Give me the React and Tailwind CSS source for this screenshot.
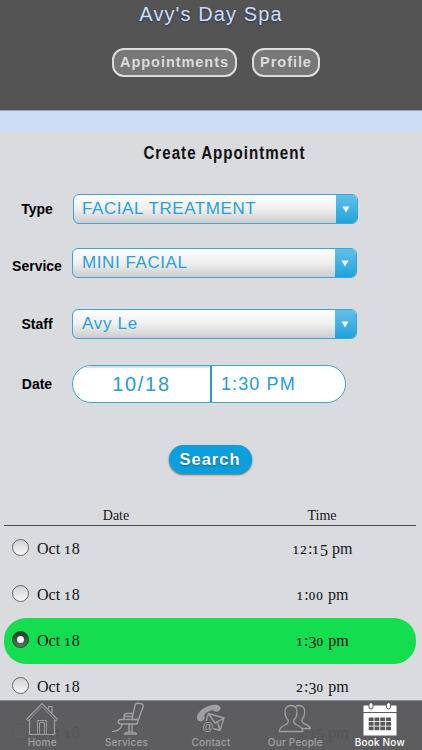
import clsx from "clsx";

const slots = [
  { date: "Oct 18", time: "12:15 pm" },
  { date: "Oct 18", time: "1:00 pm" },
  { date: "Oct 18", time: "1:30 pm", selected: true },
  { date: "Oct 18", time: "2:30 pm" },
  { date: "Oct 18", time: "3:15 pm" },
];

// Old-style figures: 0-2 sit at x-height, 3/4/5/7/9 drop below the baseline
function Figures({ children }) {
  return children.split("").map((char, i) => {
    if ("012".includes(char)) {
      return (
        <span key={i} className="text-[13px] leading-none tracking-[1.2px] [-webkit-text-stroke:0.2px_currentColor]">
          {char}
        </span>
      );
    }
    if ("34579".includes(char)) {
      return (
        <span key={i} className="align-[-2px] leading-none">
          {char}
        </span>
      );
    }
    return char;
  });
}

function HeaderButton({ className, children }) {
  return (
    <button
      className={clsx(
        "h-[29px] rounded-[12px] border-2 border-[#dcdcdc] bg-[#777] text-[14.5px] leading-none font-bold tracking-[0.95px] text-[#dcdcdc] whitespace-nowrap",
        className
      )}
    >
      {children}
    </button>
  );
}

function Label({ children }) {
  return <span className="w-[74px] shrink-0 text-center text-[14px] leading-5 font-bold text-black">{children}</span>;
}

function SelectField({ label, value, className, boxClass, labelClass, textClass }) {
  return (
    <div className={clsx("flex h-[30px] items-center", className)}>
      <div className={clsx("flex", labelClass)}>
        <Label>{label}</Label>
      </div>
      <div
        className={clsx(
          "flex h-[30px] w-[285px] overflow-hidden rounded-[6px] border border-[#3ba5d5] bg-linear-to-b from-white via-[#efefef] to-[#cdcdcd]",
          boxClass
        )}
      >
        <span className={clsx("flex-1 text-[17px] leading-[28px] whitespace-nowrap text-[#2a9fdb]", textClass)}>
          {value}
        </span>
        <span className="flex w-[21px] items-center justify-center bg-linear-to-b from-[#5fc0e8] to-[#18a3dc]">
          <svg width="8" height="7" viewBox="0 0 8 7" className="-ml-px">
            <path d="M0.5 0.5h7L4 6.5z" fill="#fff" />
          </svg>
        </span>
      </div>
    </div>
  );
}

function Radio({ checked }) {
  return (
    <span
      className={clsx(
        "flex size-[17px] items-center justify-center rounded-full border",
        checked
          ? "border-[#174b27] bg-linear-to-b from-[#14401f] to-[#5c7864]"
          : "border-[#65656a] bg-linear-to-b from-[#d2d2d4] to-[#f6f6f6]"
      )}
    >
      {checked && <span className="size-[7px] rounded-full bg-[#f4f4f4]" />}
    </span>
  );
}

function HomeIcon() {
  return (
    <svg width="34" height="34" viewBox="0 0 34 34" fill="none" stroke="currentColor" strokeWidth="1.2">
      <path d="M1.500 17.500 17 1.500l15.500 16M4.500 17v15.500h25V17M23.500 7V4.500h3.500V11" />
      <path d="M12.500 32V18.500h9V32M14.500 32V20.500h5V32" strokeWidth="0.9" />
      <path d="M1.500 17.500l1.500 1.500L17 4.500 31 19l1.500-1.500" strokeWidth="0.8" />
    </svg>
  );
}

function ChairIcon() {
  return (
    <svg width="34" height="34" viewBox="0 0 34 34" fill="none" stroke="currentColor" strokeWidth="1.4" strokeLinecap="round" strokeLinejoin="round">
      <path d="M29.500 1.500c-2-.6-4 .2-4.600 2.200L22 17.500h6.500l4.500-12.500c.6-1.500-.3-3.200-1.800-3.200z" />
      <path d="M10.500 17.500h18l-1.500 4.500H11c-3.200 0-3.700-4.500-.5-4.500z" />
      <path d="M14 17v-3c0-2 1.500-2.500 3.500-2.500H23M14.500 14.500H22" />
      <path d="M19 22v8M22 22v8M14.500 32c0-1.400 2.500-1.900 6-1.900s6 .5 6 1.900z" />
      <path d="M11.500 22c.5 4.500-2.500 7.500-9 7.500M12.500 22.500c-1 2-3 6-10 7" strokeWidth="1" />
    </svg>
  );
}

function ContactIcon() {
  return (
    <svg width="30" height="30" viewBox="0 0 30 30" fill="none" stroke="currentColor">
      <path
        d="M1 14.500C.5 8 10 .5 20.500.8c2.500.2 4 1.700 4 3.700 0 3-5.500 4.500-7.500 1.500C12.500 7 9 9 8 11.500c2.500 2-1.200 6.700-4.200 5.800C2.200 16.900 1.200 16 1 14.500z"
        fill="currentColor"
        stroke="none"
      />
      <path d="M12.500 9.500 28 14l-4 12.500-7-2M12.500 9.500 10 17.500M12.500 9.500l6.500 9.700L28 14M24 26.500l-2.500-8.500" strokeWidth="1.400" />
      <circle cx="12" cy="22.800" r="5.700" fill="#58585a" stroke="none" />
      <text x="6.200" y="26.200" fontSize="11.500" fontFamily="Liberation Sans" fontWeight="700" fill="currentColor" stroke="none">
        @
      </text>
    </svg>
  );
}

function PeopleIcon() {
  return (
    <svg width="34" height="29" viewBox="0 0 34 29" fill="none" stroke="currentColor" strokeWidth="1.300" strokeLinejoin="round">
      <path d="M13 1.500c-4 0-6.500 2.500-6 7 .1 3.500 1.500 6 3.300 7.800.2 2.700-.8 3.700-3.300 4.700-3.500 1.300-5.300 2.500-5.800 6.500h23.600c-.5-4-2.300-5.200-5.800-6.500-2.500-1-3.500-2-3.300-4.700 1.800-1.800 3.200-4.300 3.300-7.800.5-4.500-2-7-6-7z" />
      <path d="M17.500 2.500c1.200-.7 2.200-1 3.500-1 4 0 6 2.500 5.700 7-.1 3-1.200 5.300-2.800 7-.3 2.700.5 3.500 3 4.500 3.200 1.300 5 2 5.500 4.500h-8.500" />
    </svg>
  );
}

function CalendarIcon() {
  return (
    <svg width="34" height="34" viewBox="0 0 34 34">
      <path d="M0.500 3.500h33V10h-33zM0.500 11h33v22.500h-33z" fill="#fff" />
      <rect x="6" y="0.700" width="4" height="6.300" rx="2" fill="#fff" stroke="#58585a" />
      <rect x="23.500" y="0.700" width="4" height="6.300" rx="2" fill="#fff" stroke="#58585a" />
      {[15.5, 20, 24.5].map((y) =>
        [5.7, 11.5, 17.300, 23.1].map((x) => <rect key={`${x}-${y}`} x={x} y={y} width="4.900" height="3.700" fill="#58585a" />)
      )}
    </svg>
  );
}

const tabs = [
  { label: "Home", icon: HomeIcon },
  { label: "Services", icon: ChairIcon },
  { label: "Contact", icon: ContactIcon },
  { label: "Our People", icon: PeopleIcon },
  { label: "Book Now", icon: CalendarIcon, active: true },
];

function TabBar() {
  return (
    <nav className="absolute inset-x-0 bottom-0 grid h-[50px] grid-cols-5 border-t border-[#8b8b8e] bg-[#565658]/95 font-[Inter,sans-serif]">
      {tabs.map(({ label, icon: Icon, active }) => (
        <a key={label} className={clsx("flex flex-col items-center", active ? "text-white" : "text-[#a0a0a3]")}>
          <span className="flex h-[35px] items-center justify-center">
            <Icon />
          </span>
          <span className="text-[10px] leading-[12px] font-medium tracking-[0.2px] whitespace-nowrap">{label}</span>
        </a>
      ))}
    </nav>
  );
}

export default function App() {
  return (
    <div className="relative h-[750px] w-[422px] overflow-hidden bg-[#dadbdf] font-['Liberation_Sans',Arial,sans-serif]">
      <header className="h-[110px] bg-[#545454] pt-[2px]">
        <h1 className="text-center text-[20px] leading-6 tracking-[1.1px] text-[#cdddf6] [text-shadow:0_1px_2px_#26344d]">
          Avy's Day Spa
        </h1>
        <div className="mt-[22px] ml-[112px] flex gap-[15px]">
          <HeaderButton className="w-[125px]">Appointments</HeaderButton>
          <HeaderButton className="w-[68px]">Profile</HeaderButton>
        </div>
      </header>
      <div className="h-[21px] border-t border-[#98a4b8] bg-[#cdddf6]" />

      <main>
        <h2 className="flex h-[63px] justify-center pt-[10px] pl-[26px] text-[18px] leading-6 font-bold text-[#111]">
          <span className="origin-center scale-x-[0.84] tracking-[1.2px] whitespace-nowrap">Create Appointment</span>
        </h2>

        <SelectField label="Type" value="FACIAL TREATMENT" boxClass="-ml-px" textClass="pl-2 tracking-[0.58px]" />
        <SelectField
          label="Service"
          value="MINI FACIAL"
          className="mt-6"
          labelClass="pt-[6px]"
          boxClass="-ml-[2px]"
          textClass="pl-[9px] tracking-[0.58px]"
        />
        <SelectField
          label="Staff"
          value="Avy Le"
          className="mt-[31px]"
          boxClass="-ml-[2px]"
          textClass="pl-[9px] tracking-[0.7px]"
        />

        <div className="mt-[26px] flex h-[38px] items-center">
          <Label>Date</Label>
          <div className="-ml-[2px] flex h-[38px] w-[274px] overflow-hidden rounded-full border border-[#3ba5d5] bg-white text-[#2a9bcf]">
            <span className="w-[139px] border-r-2 border-[#2a9bcf] text-center text-[20px] leading-[37px] tracking-[1.7px] shadow-[inset_0_2px_1px_#ddd]">
              10/18
            </span>
            <span className="pl-[9px] text-[18px] leading-[37px] tracking-[1.1px]">1:30 PM</span>
          </div>
        </div>

        <div className="mt-[42px] flex justify-center pr-0.5">
          <button className="h-[29px] w-[83px] rounded-full bg-[#0c9fdc] text-[16.5px] leading-none font-bold tracking-[1px] text-white shadow-[0_1px_2px_#666] [text-shadow:0_1px_2px_#08618a]">
            Search
          </button>
        </div>

        <section className="mt-[32px] ml-1 w-[412px] font-['Liberation_Serif',Georgia,serif] text-[#151515]">
          <div className="grid h-[20px] grid-cols-[224px_188px] border-b border-[#4b4b52] text-center text-[14px] leading-[20px]">
            <span>Date</span>
            <span>Time</span>
          </div>
          {slots.map(({ date, time, selected }) => (
            <div
              key={time}
              className={clsx(
                "grid h-[46px] grid-cols-[224px_188px] items-center rounded-[22px] text-[16px]",
                selected && "bg-[#15dd50]"
              )}
            >
              <div className="flex items-center gap-2 pl-2">
                <span className="-mt-1">
                  <Radio checked={selected} />
                </span>
                <span className="h-5 leading-5 whitespace-nowrap">
                  <Figures>{date}</Figures>
                </span>
              </div>
              <span className="h-5 pl-px text-center leading-5 whitespace-nowrap">
                <Figures>{time}</Figures>
              </span>
            </div>
          ))}
        </section>
      </main>

      <TabBar />
    </div>
  );
}
